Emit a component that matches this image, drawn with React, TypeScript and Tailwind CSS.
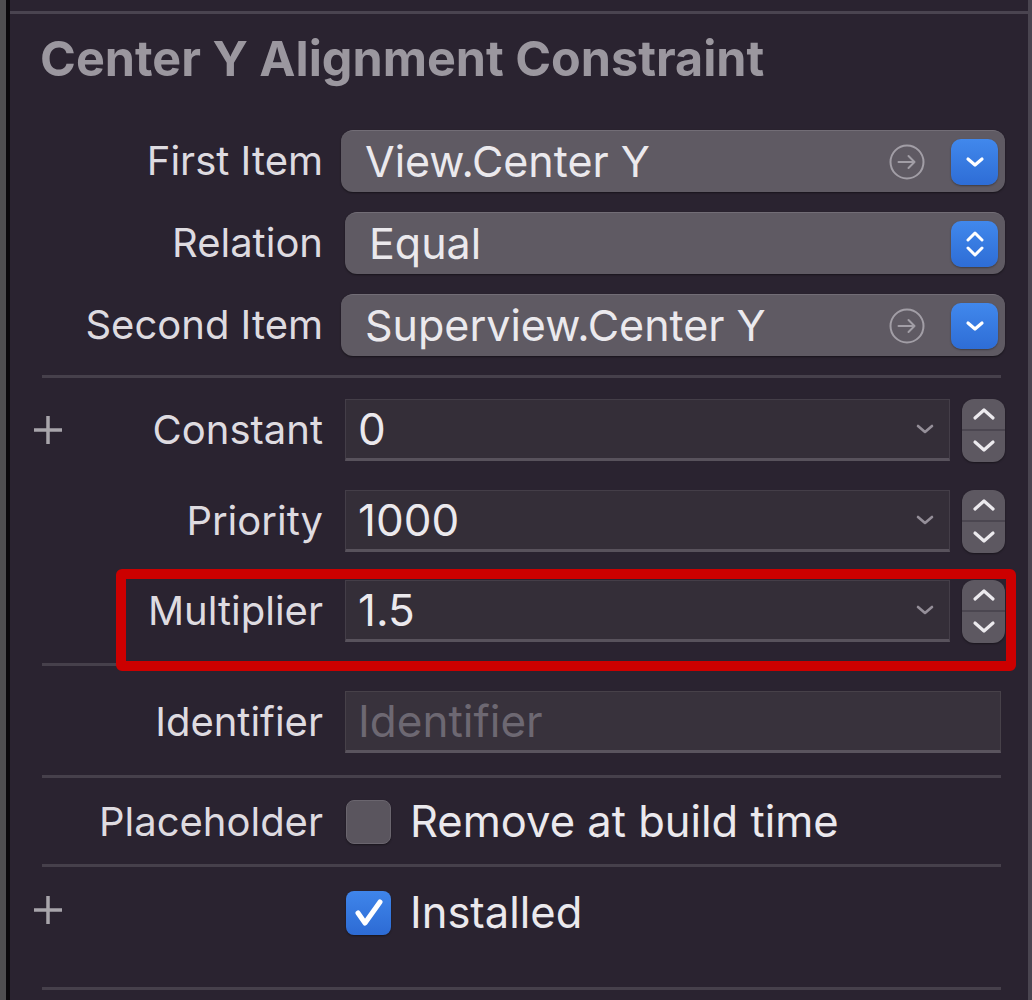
import React from 'react';

function CircleArrow() {
  return (
    <svg width="36" height="36" viewBox="0 0 36 36" fill="none" stroke="#a29ea6" strokeWidth={2} strokeLinecap="round" strokeLinejoin="round">
      <circle cx="18" cy="18" r="16.5" />
      <path d="M9.5 18h16M19.5 12l6 6-6 6" />
    </svg>
  );
}

function BlueButton({ both }: { both?: boolean }) {
  return (
    <div className="flex h-[46px] w-[47px] items-center justify-center rounded-[10px] bg-linear-to-b from-[#4188ec] to-[#2e6dd6] shadow-[0_1px_2px_rgba(0,0,0,0.35)]">
      {both ? (
        <svg width="20" height="30" viewBox="0 0 20 30" fill="none" stroke="#ffffff" strokeWidth={3} strokeLinecap="round" strokeLinejoin="round">
          <path d="M3 11l7-7 7 7M3 19l7 7 7-7" />
        </svg>
      ) : (
        <svg width="20" height="12" viewBox="0 0 20 12" fill="none" stroke="#ffffff" strokeWidth={3.2} strokeLinecap="round" strokeLinejoin="round">
          <path d="M3 3l7 6 7-6" />
        </svg>
      )}
    </div>
  );
}

function Plus() {
  return (
    <svg width="28" height="28" viewBox="0 0 28 28" fill="none" stroke="#a8a5ab" strokeWidth={3.5}>
      <path d="M14 0v28M0 14h28" />
    </svg>
  );
}

function Label({ text, plus }: { text: string; plus?: boolean }) {
  return (
    <div className={`flex w-[313px] items-center pl-[24px] ${plus ? 'justify-between' : 'justify-end'}`}>
      {plus && <Plus />}
      <span className="text-[40px] leading-none text-[#dedbe0]">{text}</span>
    </div>
  );
}

function PopupRow({ label, value, both, ml, mt }: { label: string; value: string; both?: boolean; ml: string; mt: string }) {
  return (
    <div className={`flex h-[62px] items-center ${mt}`}>
      <Label text={label} />
      <div className={`flex h-[62px] items-center rounded-[12px] border-t border-[#726d76] bg-[#5f5a63] shadow-[0_1px_2px_rgba(0,0,0,0.45)] ${ml}`}>
        <span className="flex-1 pl-[24px] text-[43px] leading-none text-[#ebe9ed]">{value}</span>
        {!both && (
          <div className="mr-[26px]">
            <CircleArrow />
          </div>
        )}
        <div className="mr-[7px]">
          <BlueButton both={both} />
        </div>
      </div>
    </div>
  );
}

function Stepper() {
  return (
    <div className="ml-[12px] flex h-[63px] w-[43px] flex-col rounded-[12px] bg-[#5d5861] shadow-[0_1px_2px_rgba(0,0,0,0.4)]">
      <div className="flex flex-1 items-center justify-center border-b-2 border-[#4b4650]">
        <svg width="24" height="14" viewBox="0 0 24 14" fill="none" stroke="#eceaee" strokeWidth={3.2} strokeLinecap="round" strokeLinejoin="round">
          <path d="M3 11l9-8 9 8" />
        </svg>
      </div>
      <div className="flex flex-1 items-center justify-center">
        <svg width="24" height="14" viewBox="0 0 24 14" fill="none" stroke="#eceaee" strokeWidth={3.2} strokeLinecap="round" strokeLinejoin="round">
          <path d="M3 3l9 8 9-8" />
        </svg>
      </div>
    </div>
  );
}

function NumberRow({ label, value, plus, mt }: { label: string; value: string; plus?: boolean; mt: string }) {
  return (
    <div className={`flex h-[64px] items-center ${mt}`}>
      <Label text={label} plus={plus} />
      <div className="ml-[22px] flex h-[62px] w-[605px] items-center border border-[#443e48] border-b-[3px] border-b-[#58525c] bg-[#342e38]">
        <span className="flex-1 pl-[12px] text-[44px] leading-none text-[#ebe9ed]">{value}</span>
        <svg className="mr-[14px]" width="20" height="12" viewBox="0 0 20 12" fill="none" stroke="#958f99" strokeWidth={2.6} strokeLinecap="round" strokeLinejoin="round">
          <path d="M3 3l7 6 7-6" />
        </svg>
      </div>
      <Stepper />
    </div>
  );
}

function Separator({ mt }: { mt: string }) {
  return <div className={`ml-[32px] h-[3px] w-[959px] bg-[#46404b] ${mt}`} />;
}

export default function App() {
  return (
    <div className="relative flex h-[1000px] w-[1032px] overflow-hidden bg-[#2a2330] font-[family-name:Inter,'Liberation_Sans',sans-serif]">
      <div className="w-[6px] bg-[#4f4f50]" />
      <div className="w-[4px] bg-[#0a090b]" />
      <div className="flex w-[1018px] flex-col">
        <div className="h-[11px]" />
        <div className="h-[3px] bg-[#4a4450]" />
        <div className="flex h-[90px] items-center pl-[30px]">
          <h1 className="text-[48.5px] font-bold leading-none text-[#9b979f]">Center Y Alignment Constraint</h1>
        </div>

        <PopupRow label="First Item" value="View.Center Y" ml="ml-[18px] w-[664px]" mt="mt-[26px]" />
        <PopupRow label="Relation" value="Equal" both ml="ml-[22px] w-[660px]" mt="mt-[20px]" />
        <PopupRow label="Second Item" value="Superview.Center Y" ml="ml-[18px] w-[664px]" mt="mt-[20px]" />

        <Separator mt="mt-[19px]" />

        <NumberRow label="Constant" value="0" plus mt="mt-[20px]" />
        <NumberRow label="Priority" value="1000" mt="mt-[27px]" />
        <NumberRow label="Multiplier" value="1.5" mt="mt-[26px]" />

        <Separator mt="mt-[20px]" />

        <div className="mt-[25px] flex h-[62px] items-center">
          <Label text="Identifier" />
          <div className="ml-[22px] flex h-[62px] w-[656px] items-center border border-[#474149] border-b-[3px] border-b-[#5a545e] bg-[#38323c]">
            <span className="pl-[12px] text-[44px] leading-none text-[#6d6872]">Identifier</span>
          </div>
        </div>

        <Separator mt="mt-[22px]" />

        <div className="mt-[22px] flex h-[44px] items-center">
          <Label text="Placeholder" />
          <div className="ml-[23px] h-[44px] w-[45px] rounded-[8px] border border-[#6a656e] bg-[#5a555e] shadow-[0_1px_2px_rgba(0,0,0,0.4)]" />
          <span className="ml-[19px] text-[43.5px] leading-none text-[#ebe9ed]">Remove at build time</span>
        </div>

        <Separator mt="mt-[20px]" />

        <div className="mt-[24px] flex h-[44px] items-center">
          <div className="flex w-[313px] items-center pl-[24px]">
            <div className="-mt-[6px]">
              <Plus />
            </div>
          </div>
          <div className="ml-[23px] flex h-[44px] w-[45px] items-center justify-center rounded-[8px] bg-linear-to-b from-[#3f85ea] to-[#2d6bd4] shadow-[0_1px_2px_rgba(0,0,0,0.4)]">
            <svg width="32" height="30" viewBox="0 0 32 30" fill="none" stroke="#ffffff" strokeWidth={5} strokeLinecap="round" strokeLinejoin="round">
              <path d="M5 15l7 10L27 4" />
            </svg>
          </div>
          <span className="ml-[19px] text-[43.5px] leading-none text-[#ebe9ed]">Installed</span>
        </div>

        <Separator mt="mt-[52px]" />
      </div>
      <div className="w-[4px] bg-[#4a4550]" />

      <div className="pointer-events-none absolute left-[116px] top-[569px] h-[102px] w-[900px] rounded-[6px] border-[10px] border-[#cc0000]" />
    </div>
  );
}
